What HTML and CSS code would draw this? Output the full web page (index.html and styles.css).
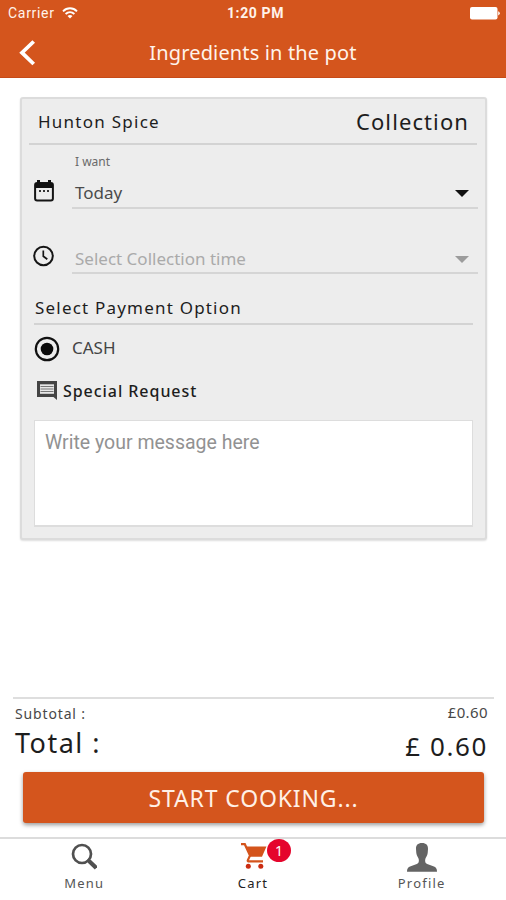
FILE: index.html
```html
<!DOCTYPE html>
<html lang="en">
<head>
<meta charset="utf-8">
<title>Ingredients in the pot</title>
<link rel="stylesheet" href="styles.css">
</head>
<body>
<div class="app">
  <header class="header">
    <div class="status">
      <div class="carrier"><span>Carrier</span>
        <svg width="16" height="12" viewBox="0 0 16 12" fill="none" stroke="#fff" stroke-width="1.9"><path d="M1 4.3C5 .3 11 .3 15 4.3M3.6 7C6.200 4.600 9.800 4.600 12.400 7"/><path d="M8 11.600L5.500 9.100Q8 7 10.500 9.100Z" fill="#fff" stroke="none"/></svg>
      </div>
      <span class="clock">1:20 PM</span>
      <svg class="battery" width="30" height="13" viewBox="0 0 30 13" fill="#fff"><rect width="27.500" height="12.500" rx="2"/><path d="M28.200 4.200Q29.800 4.800 29.800 6.300T28.200 8.400Z"/></svg>
    </div>
    <div class="titlebar">
      <svg class="back" width="17" height="26" viewBox="0 0 17 26" fill="none" stroke="#fff" stroke-width="3.800"><path d="M14.700 1.500L3 12.700L14.700 24"/></svg>
      <h1 class="title">Ingredients in the pot</h1>
    </div>
  </header>

  <main class="card">
    <div class="card-head">
      <span class="shop">Hunton Spice</span>
      <span class="mode">Collection</span>
    </div>
    <div class="field day">
      <svg class="field-icon" width="20" height="22" viewBox="0 0 20 22"><rect x="1.100" y="3.100" width="17.800" height="17.400" rx="2" fill="none" stroke="#151515" stroke-width="2"/><path d="M1 3h18v5H1zM3 0h3v4H3zM14 0h3v4h-3z" fill="#111"/><path d="M5 10h2v2H5zM9 10h2v2H9zM13 10h2v2h-2z" fill="#333"/></svg>
      <div class="select">
        <span class="label">I want</span>
        <div class="value"><span class="today">Today</span><i class="arrow"></i></div>
      </div>
    </div>
    <div class="field time">
      <svg class="field-icon" width="22" height="22" viewBox="0 0 22 22" fill="none" stroke="#151515" stroke-width="2"><circle cx="10.500" cy="11" r="9.300"/><path d="M10.300 5.500V11.300L14.300 14.300" stroke-width="1.700"/></svg>
      <div class="select">
        <div class="value muted"><span class="pick">Select Collection time</span><i class="arrow"></i></div>
      </div>
    </div>
    <h2 class="payment">Select Payment Option</h2>
    <div class="option">
      <svg width="26" height="26" viewBox="0 0 26 26"><circle cx="13" cy="13" r="11.200" fill="none" stroke="#111" stroke-width="2.200"/><circle cx="13" cy="13" r="6.300" fill="#0a0a0a"/></svg>
      <span class="cash">CASH</span>
    </div>
    <div class="request">
      <svg width="20" height="19" viewBox="0 0 20 19"><path d="M0 0H20V19L16.500 16H0Z" fill="#444"/><path d="M3 3.300h14v9.500H3z" fill="#e7e7e7"/><path d="M3.500 5.500h13M3.500 8h13M3.500 10.500h13" stroke="#777" stroke-width="1"/></svg>
      <span class="request-text">Special Request</span>
    </div>
    <div class="message">Write your message here</div>
  </main>

  <section class="summary">
    <div class="row-sub"><span class="sub-label">Subtotal :</span><span class="sub-price">£0.60</span></div>
    <div class="row-total"><span class="total-label">Total :</span><span class="total-price">£ 0.60</span></div>
  </section>
  <div class="cta"><span>START COOKING...</span></div>

  <nav class="tabs">
    <div class="tab">
      <svg width="26" height="27" viewBox="0 0 26 27" fill="none" stroke="#505050"><circle cx="11" cy="10" r="9" stroke-width="2.700"/><path d="M16.500 15.500L18.500 17.500" stroke-width="2.700"/><path d="M18 17L25.300 24" stroke-width="4.200"/></svg>
      <span class="menu">Menu</span>
    </div>
    <div class="tab active">
      <div class="cart-icon">
        <svg width="26" height="27" viewBox="0 0 26 27"><path d="M0 1.200H3.800L9 12.500L6.800 17.300Q6.500 18.300 8 18.300H22" fill="none" stroke="#d4541c" stroke-width="2.200"/><path d="M4.800 3.500H25.500L21 13.800H9Z" fill="#d4541c"/><circle cx="7.300" cy="23.200" r="2.500" fill="#cb2c12"/><circle cx="19.800" cy="23.200" r="2.500" fill="#cb2c12"/></svg>
        <span class="badge">1</span>
      </div>
      <span class="cart">Cart</span>
    </div>
    <div class="tab">
      <svg width="30" height="29" viewBox="0 0 30 29" fill="#646464"><path d="M15 0C10.800 0 8.800 2.200 9 6L9.300 10C9.700 13 11.200 14.400 11.700 16C12.200 18.500 11.700 20.200 9.800 21L3 23.600C.8 24.500 0 26 0 28.700H30C30 26 29.200 24.500 27 23.600L20.200 21C18.300 20.200 17.800 18.500 18.300 16C18.800 14.400 20.300 13 20.700 10L21 6C21.200 2.200 19.200 0 15 0Z"/></svg>
      <span class="profile">Profile</span>
    </div>
  </nav>
</div>
</body>
</html>
```
FILE: styles.css
```css
* { box-sizing: border-box; }
body { margin: 0; background: #fff; font-family: "Noto Sans", "Open Sans", sans-serif; color: #1d1d1d; }
span, h1, h2 { white-space: nowrap; }
.app { width: 506px; height: 900px; display: flex; flex-direction: column; overflow: hidden; }

.header { height: 78px; background: #d4551d; color: #fff3ea; border-bottom: 1px solid #c64a18; flex: none; }
.status { height: 26px; display: grid; grid-template-columns: 1fr auto 1fr; align-items: center; padding: 0 6px 0 8px; font: 14px/26px Roboto, sans-serif; }
.carrier { display: flex; align-items: center; gap: 7px; letter-spacing: .7px; }
.clock { font-weight: 700; font-size: 14px; letter-spacing: .6px; padding-left: 3px; }
.battery { justify-self: end; }
.titlebar { height: 52px; display: grid; grid-template-columns: 60px 1fr 60px; align-items: center; }
.back { margin-left: 19px; }
.title { margin: 0; padding-top: 1px; font-size: 20px; font-weight: 400; line-height: 52px; text-align: center; letter-spacing: .15px; }

.card { margin: 19px 19px 0 20px; height: 443px; flex: none; background: #ededed; border: 2px solid #dcdcdc; border-radius: 3px; box-shadow: 0 1px 2px #0002; display: flex; flex-direction: column; }
.card-head { margin: 0 8px 0 7px; padding: 0 8px 0 9px; height: 46px; flex: none; display: flex; justify-content: space-between; border-bottom: 2px solid #d3d3d3; line-height: 46px; }
.shop { font-size: 17px; letter-spacing: 1.250px; }
.mode { font-size: 22px; letter-spacing: 1.100px; line-height: 45px; }
.field { display: flex; padding: 0 7px 0 11px; flex: none; }
.field-icon { flex: none; }
.select { flex: 1; margin-left: 17px; padding-left: 3px; border-bottom: 2px solid #d5d5d5; }
.day { height: 64px; }
.day .field-icon { margin: 35px 1px 0; }
.label { display: block; font-size: 12px; line-height: 16px; margin-top: 9px; color: #6a6a6a; }
.value { display: flex; justify-content: space-between; align-items: center; padding-right: 9px; height: 38px; }
.today { font-size: 17px; line-height: 30px; margin-top: 8px; color: #4b4b4b; }
.day .arrow { margin-top: 9px; }
.arrow { border: 7px solid transparent; border-top-color: #111; border-bottom: 0; }
.time { height: 65px; }
.time .field-icon { margin-top: 36px; }
.time .value { margin-top: 30px; height: 32px; }
.time .arrow { margin-top: 8px; }
.pick { font-size: 17px; line-height: 28px; margin-top: 7px; color: #aaa; }
.muted .arrow { border-top-color: #9c9c9c; }
.payment { margin: 17px 12px 0; padding-left: 1px; height: 34px; font-size: 17px; line-height: 34px; font-weight: 400; letter-spacing: 1.200px; border-bottom: 2px solid #d3d3d3; flex: none; }
.option { height: 46px; padding: 1px 0 0 12px; display: flex; gap: 12px; align-items: center; flex: none; }
.cash { font-size: 17px; line-height: 22px; margin-top: -1px; color: #444; }
.request { height: 39px; padding-left: 15px; display: flex; gap: 6px; align-items: center; flex: none; }
.request-text { font-size: 16px; font-weight: 500; letter-spacing: .950px; }
.message { margin: 10px 12px 0; height: 107px; flex: none; background: #fff; border: 1px solid #ddd; border-bottom-width: 2px; padding: 9px 10px; font: 19.500px/26px Roboto, sans-serif; color: #929292; }

.summary { margin: 157px 12px 0 13px; border-top: 2px solid #dedede; padding: 0 6px 0 2px; height: 75px; flex: none; }
.row-sub { display: flex; justify-content: space-between; height: 29px; font-size: 14px; color: #484848; line-height: 30px; letter-spacing: .850px; }
.sub-price { line-height: 26px; font-size: 15px; letter-spacing: .4px; }
.row-total { display: flex; justify-content: space-between; font-size: 27px; line-height: 30px; letter-spacing: 1.500px; }
.total-price { line-height: 37px; font-size: 26px; letter-spacing: 1.600px; }
.cta { margin: 0 22px 0 23px; height: 51px; flex: none; border-radius: 3px; background: #d4551d; box-shadow: 0 2px 4px #0006; color: #fff0e6; font-size: 23px; line-height: 52px; letter-spacing: .850px; text-align: center; }
.tabs { margin-top: 14px; height: 63px; border-top: 2px solid #dcdcdc; display: grid; grid-template-columns: repeat(3, 1fr); flex: none; }
.tab { display: flex; flex-direction: column; align-items: center; font-size: 13px; letter-spacing: 1.200px; color: #555; }
.tab > svg, .cart-icon { margin-top: 4px; height: 29px; flex: none; }
.tab > span { line-height: 20px; margin-top: 1px; }
.tab.active { color: #222; }
.cart-icon { position: relative; width: 26px; left: 1px; }
.badge { position: absolute; left: 26px; top: -4px; width: 24px; height: 23px; border-radius: 50%; background: #e5052c; color: #fff; font-size: 14px; line-height: 23px; letter-spacing: 0; text-align: center; }
```
